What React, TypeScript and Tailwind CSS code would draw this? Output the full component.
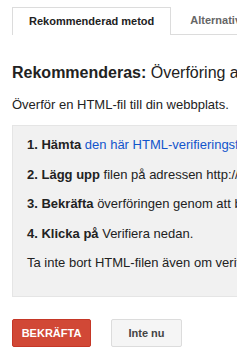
import React from 'react';

const steps = [
  { num: '1.', bold: 'Hämta', rest: 'den här HTML-verifieringsfilen [google1234.html].', link: true },
  { num: '2.', bold: 'Lägg upp', rest: 'filen på adressen http://www.example.com/', link: false },
  { num: '3.', bold: 'Bekräfta', rest: 'överföringen genom att besöka sidan i webbläsaren.', link: false },
  { num: '4.', bold: 'Klicka på', rest: 'Verifiera nedan.', link: false },
];

export default function App() {
  return (
    <div
      className="w-[237px] h-[354px] overflow-hidden bg-white text-[#222]"
      style={{ fontFamily: '"Liberation Sans", Arial, sans-serif' }}
    >
      <div className="pt-[7px] pl-[12px]">
        <div className="flex border-b border-[#dcdcdc]">
          <div className="h-[28px] -mb-px px-[16px] flex items-center border border-b-0 border-[#dcdcdc] bg-white text-[11px] font-bold text-[#222] whitespace-nowrap">
            Rekommenderad metod
          </div>
          <div className="h-[27px] pl-[19px] flex items-center text-[11px] font-bold text-[#666] whitespace-nowrap">
            Alternativa metoder
          </div>
        </div>
      </div>

      <div className="px-[12px]">
        <h2 className="mt-[28px] text-[16px] leading-[19px] whitespace-nowrap">
          <span className="font-bold">Rekommenderas:</span> Överföring av HTML-fil
        </h2>
        <p className="mt-[15px] text-[13px] leading-[16px] whitespace-nowrap">
          Överför en HTML-fil till din webbplats.
        </p>

        <div className="mt-[12px] w-[400px] h-[172px] border border-[#e5e5e5] bg-[#f1f1f1] pt-[11px] pl-[14px] text-[13px] leading-[16px] whitespace-nowrap">
          {steps.map((s) => (
            <p key={s.num} className="mb-[13.5px]">
              <span className="font-bold">
                {s.num} {s.bold}
              </span>{' '}
              {s.link ? <span className="text-[#1155cc]">{s.rest}</span> : s.rest}
            </p>
          ))}
          <p>Ta inte bort HTML-filen även om verifieringen lyckas.</p>
        </div>

        <div className="mt-[22px] flex gap-[20px]">
          <button className="w-[79px] h-[28px] rounded-[2px] border border-[#c53727] bg-[#d14836] text-[11px] font-bold text-white uppercase">
            Bekräfta
          </button>
          <button className="w-[71px] h-[28px] rounded-[2px] border border-[#dcdcdc] bg-[#f5f5f5] text-[11px] font-bold text-[#444]">
            Inte nu
          </button>
        </div>
      </div>
    </div>
  );
}
